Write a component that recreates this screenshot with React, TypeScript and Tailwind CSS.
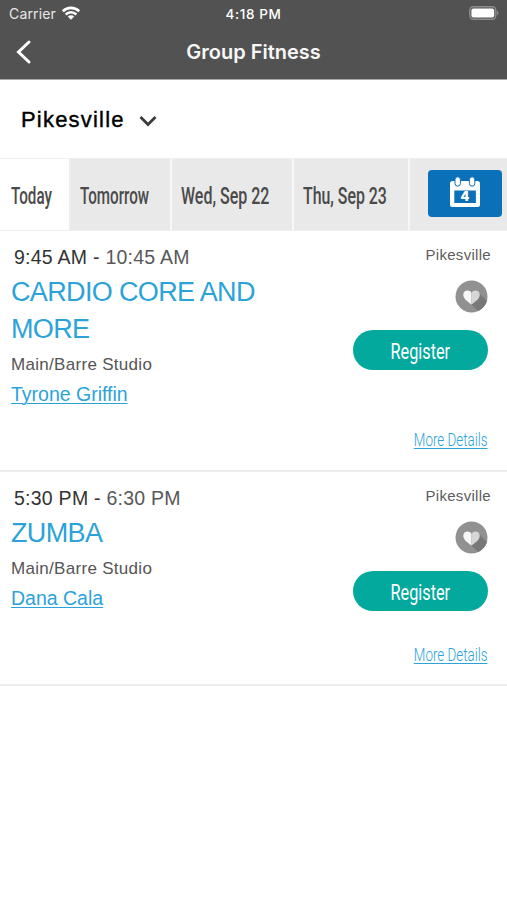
import clsx from 'clsx'

interface FitnessClass {
  id: number
  start: string
  end: string
  title: string
  studio: string
  instructor: string
  location: string
  height: string
}

const classes: FitnessClass[] = [
  {
    id: 1,
    start: '9:45 AM -',
    end: '10:45 AM',
    title: 'CARDIO CORE AND MORE',
    studio: 'Main/Barre Studio',
    instructor: 'Tyrone Griffin',
    location: 'Pikesville',
    height: 'h-[241px] pb-[18px]',
  },
  {
    id: 2,
    start: '5:30 PM -',
    end: '6:30 PM',
    title: 'ZUMBA',
    studio: 'Main/Barre Studio',
    instructor: 'Dana Cala',
    location: 'Pikesville',
    height: 'h-[214px] pb-[17px]',
  },
]

const days = [
  { label: 'Today', width: 'w-[71px] pl-[11px]', scale: 'scale-x-[0.66]', active: true },
  { label: 'Tomorrow', width: 'w-[101px] pl-[9px]', scale: 'scale-x-[0.66]', active: false },
  { label: 'Wed, Sep 22', width: 'w-[122px] pl-[9px]', scale: 'scale-x-[0.695]', active: false },
  { label: 'Thu, Sep 23', width: 'w-[116px] pl-[9px]', scale: 'scale-x-[0.69]', active: false },
]

function StatusBar() {
  return (
    <div className="grid h-[27px] grid-cols-3 items-center px-[9px] font-['Inter',sans-serif] text-[14px] text-[#e8e8e8]">
      <div className="flex items-center gap-[6px]">
        <span className="text-[14px] tracking-[0.15px]">Carrier</span>
        <svg className="-mt-[2px]" width="18" height="14" viewBox="0 0 18 14" fill="none" stroke="#fff" strokeWidth="2.6">
          <path d="M0.8 5.2a11.7 11.7 0 0 1 16.4 0" />
          <path d="M3.7 8.5a7.5 7.5 0 0 1 10.6 0" />
          <path d="M9 13.8 5.8 10.6a4.6 4.6 0 0 1 6.4 0z" fill="#fff" stroke="none" />
        </svg>
      </div>
      <span className="pt-px text-center text-[13.5px] font-medium tracking-[0.65px] text-white">4:18 PM</span>
      <svg className="-mt-px -mr-[1px] justify-self-end" width="30" height="14" viewBox="0 0 30 14">
        <rect x="0.8" y="0.8" width="26" height="12.4" rx="3.6" fill="none" stroke="#8c8c8c" strokeWidth="1.4" />
        <rect x="2.4" y="2.4" width="22.8" height="9.2" rx="2" fill="#fff" />
        <path d="M28 4.8c2 .8 2 3.6 0 4.4z" fill="#8c8c8c" />
      </svg>
    </div>
  )
}

function CalendarIcon() {
  return (
    <svg className="-mt-[4px]" width="32" height="32" viewBox="0 0 32 32">
      <rect x="1" y="5" width="30" height="26" rx="2.5" fill="#fff" />
      <rect x="5.3" y="14.5" width="21.6" height="12.5" fill="#0a70b8" />
      <rect x="6" y="0.8" width="5.4" height="9.4" rx="2.7" fill="#fff" stroke="#0a70b8" strokeWidth="1" />
      <rect x="20.4" y="0.8" width="5.4" height="9.4" rx="2.7" fill="#fff" stroke="#0a70b8" strokeWidth="1" />
      <text
        x="16"
        y="25.2"
        textAnchor="middle"
        fill="#fff"
        fontFamily="Inter, sans-serif"
        fontWeight="900"
        fontSize="12.5"
      >
        4
      </text>
    </svg>
  )
}

function HeartBadge() {
  return (
    <svg width="33" height="33" viewBox="0 0 33 33">
      <defs>
        <clipPath id="badge">
          <circle cx="16.5" cy="16.5" r="16" />
        </clipPath>
      </defs>
      <circle cx="16.5" cy="16.5" r="16" fill="#919191" />
      <path d="M23.500 12.500 36 25v11H28L16.500 24.500z" fill="#787878" clipPath="url(#badge)" />
      <path
        d="M16.500 24.600C11.500 21 8.300 18.200 8.300 14.700C8.300 10 14.500 9.200 16.500 13z"
        fill="#f6f6f6"
      />
      <path d="M16.500 24.600C21.500 21 24.700 18.200 24.700 14.700C24.700 10 18.500 9.200 16.500 13z" fill="#d6d6d6" />
    </svg>
  )
}

function ClassCard({ item }: { item: FitnessClass }) {
  return (
    <article
      className={clsx(
        'flex justify-between border-b-2 border-[#ececec] pt-[14px] pl-[11px]',
        item.height
      )}
    >
      <div className="w-[290px]">
        <p className="ml-[3px] text-[19.5px] leading-[24px] tracking-[0.25px] text-[#585858]">
          <span className="text-[#333]">{item.start}</span> {item.end}
        </p>
        <h2 className="mt-[5px] text-[27px] leading-[37px] tracking-[-0.65px] text-[#2ba3d9]">
          {item.title}
        </h2>
        <p className="mt-[5px] text-[17px] leading-[24px] tracking-[0.3px] text-[#555]">
          {item.studio}
        </p>
        <a
          href="#"
          className="mt-[3px] block text-[19.5px] leading-[28px] text-[#2ba3d9] underline decoration-1 underline-offset-2"
        >
          {item.instructor}
        </a>
      </div>

      <div className="flex flex-col items-end pr-[19px]">
        <span className="mt-px -mr-[3px] text-[15px] leading-[18px] tracking-[0.3px] text-[#5c5c5c]">
          {item.location}
        </span>
        <div className="mt-[16px] h-[33px]">
          <HeartBadge />
        </div>
        <button className="mt-[17px] flex h-[40px] w-[135px] items-center justify-center rounded-full bg-[#03a99d] font-['Roboto',sans-serif] text-[22px] text-white">
          <span className="inline-block scale-x-[0.74] pt-[3px]">Register</span>
        </button>
        <a
          href="#"
          className="mt-auto flex h-[24px] w-[74px] justify-end font-['Roboto',sans-serif] text-[19px] leading-[24px] font-light whitespace-nowrap text-[#2ba3d9]"
        >
          <span className="inline-block origin-right scale-x-[0.705] underline decoration-1 underline-offset-2">
            More Details
          </span>
        </a>
      </div>
    </article>
  )
}

export default function App() {
  return (
    <div className="min-h-screen overflow-hidden bg-white font-['Liberation_Sans',Arial,sans-serif]">
      {/* Header */}
      <header className="h-[80px] border-b border-[#a8a8a8] bg-[#525252]">
        <StatusBar />
        <div className="grid h-[50px] grid-cols-[60px_1fr_60px] items-center">
          <svg className="ml-[14px]" width="18" height="26" viewBox="0 0 18 26" fill="none">
            <path d="M15 3 4.500 13 15 23" stroke="#fff" strokeWidth="3" strokeLinecap="round" />
          </svg>
          <h1 className="text-center font-['Inter',sans-serif] text-[20px] font-semibold text-[#f7f7f7]">
            Group Fitness
          </h1>
        </div>
      </header>

      {/* Location picker */}
      <div className="flex h-[78px] items-center gap-[14px] pl-[21px] text-black">
        <span className="text-[22px] tracking-[1.2px] [-webkit-text-stroke:0.4px_black]">Pikesville</span>
        <svg className="mt-[3px]" width="18" height="12" viewBox="0 0 18 12" fill="none">
          <path d="M1.500 2 9 9.500 16.500 2" stroke="#3c3c3c" strokeWidth="2.800" />
        </svg>
      </div>

      {/* Day tabs */}
      <nav className="flex h-[73px] border-y border-[#f0f0f0] bg-[#e9e9e9]">
        {days.map((day) => (
          <button
            key={day.label}
            className={clsx(
              "shrink-0 border-r-2 text-left font-['Roboto',sans-serif] text-[23px] font-medium whitespace-nowrap text-[#4a4a4a]",
              day.width,
              day.active ? 'border-[#ededed] bg-white' : 'border-[#f7f7f7]'
            )}
          >
            <span className={clsx('inline-block origin-left pt-[5px]', day.scale)}>{day.label}</span>
          </button>
        ))}
        <button className="mt-[11px] ml-[18px] flex h-[47px] w-[74px] shrink-0 items-center justify-center rounded-[4px] bg-[#0a70b8]">
          <CalendarIcon />
        </button>
      </nav>

      {/* Schedule */}
      <main>
        {classes.map((item) => (
          <ClassCard key={item.id} item={item} />
        ))}
      </main>
    </div>
  )
}
